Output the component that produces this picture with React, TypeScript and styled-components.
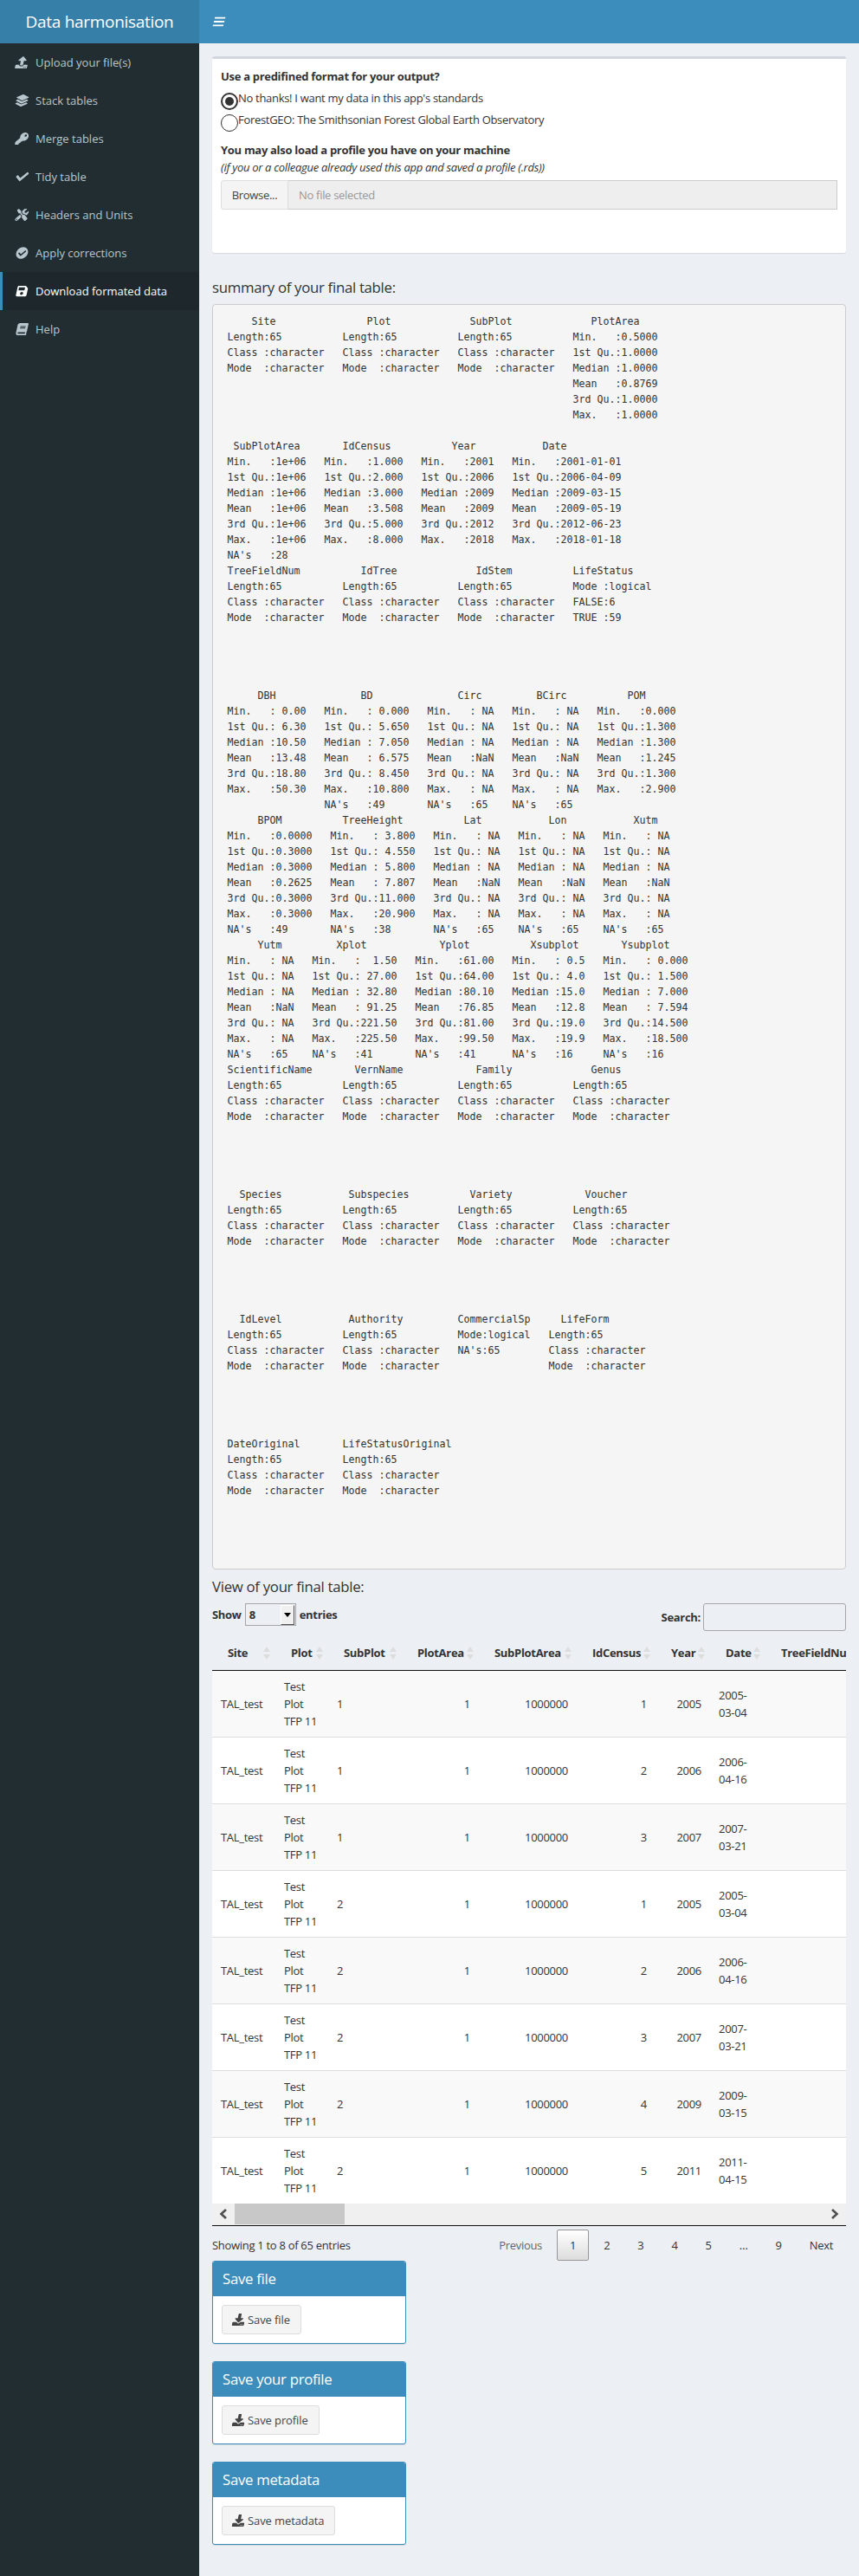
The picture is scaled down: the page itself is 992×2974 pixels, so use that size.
import React from "react";
import styled, { createGlobalStyle } from "styled-components";
import { FaUpload, FaLayerGroup, FaKey, FaCheck, FaTools, FaCheckCircle, FaSave, FaBook, FaDownload, FaBars } from "react-icons/fa";

const SANS = `"Open Sans", "Noto Sans", sans-serif`;

const Global = createGlobalStyle`
  html, body { margin: 0; padding: 0; background: #ecf0f5; }
  body { font-family: ${SANS}; font-size: 13px; letter-spacing: -0.3px; line-height: 20px; color: #333; }
  * { box-sizing: border-box; }
`;

const Page = styled.div`width: 992px; min-height: 2974px; display: flex; flex-direction: column;`;
const TopBar = styled.header`display: flex; height: 50px; background: #3c8dbc; flex: none;`;
const Logo = styled.div`width: 230px; background: #367fa9; color: #fff; font-size: 19px; line-height: 50px; text-align: center; letter-spacing: -0.3px;`;
const Toggle = styled.div`
  margin-left: 15px; display: flex; align-items: center; color: #fff; font-size: 14px;
  svg { transform: skewX(-14deg); width: 16px; height: 14px; }
`;
const Body = styled.div`display: flex; flex: 1;`;
const Side = styled.nav`width: 230px; flex: none; background: #222d32; letter-spacing: 0;`;
const NavItem = styled.div<{ $active?: boolean }>`
  height: 44px; display: flex; align-items: center; gap: 8px;
  padding-left: ${p => (p.$active ? "15px" : "18px")};
  border-left: ${p => (p.$active ? "3px solid #3c8dbc" : "0")};
  background: ${p => (p.$active ? "#1e282c" : "transparent")};
  color: ${p => (p.$active ? "#fff" : "#b8c7ce")};
  svg { width: 15px; height: 14px; flex: none; transform: skewX(-12deg); }
`;
const Main = styled.main`flex: 1; min-width: 0; padding: 15px;`;
const Card = styled.section`
  height: 227px; background: #fff; border-top: 3px solid #d2d6de; border-radius: 3px;
  box-shadow: 0 1px 1px rgba(0,0,0,.1); padding: 10px;
`;
const Strong = styled.div`font-weight: 700;`;
const RadioRow = styled.label`
  display: flex; align-items: flex-start; height: 25px;
  &:first-of-type { margin-top: 9px; }
`;
const RadioInput = styled.input`
  appearance: none; width: 20px; height: 20px; margin: 0; flex: none; border-radius: 50%;
  border: 1.3px solid #333; background: #fff; position: relative;
  &:checked { border-width: 2px; }
  &:checked::after { content: ""; position: absolute; left: 3px; top: 3px; width: 10px; height: 10px; border-radius: 50%; background: #333; }
`;
const RadioText = styled.span`margin-top: -4px;`;
const ProfileTitle = styled(Strong)`margin-top: 6px;`;
const Hint = styled.div`font-style: italic;`;
const FileRow = styled.div`display: flex; height: 34px; margin-top: 5px;`;
const Browse = styled.div`
  width: 78px; background: #f4f4f4; border: 1px solid #ddd; border-radius: 3px 0 0 3px; color: #444;
  line-height: 32px; text-align: center;
`;
const FileName = styled.div`
  flex: 1; background: #eee; border: 1px solid #ccc; border-left: 0; color: #999; padding-left: 12px; line-height: 32px;
`;
const Heading = styled.h4<{ $top: number }>`
  margin: ${p => p.$top}px 0 9px; font-weight: 400; font-size: 16.8px; line-height: 20px; color: #333; letter-spacing: -0.3px;
`;
const Summary = styled.pre`
  margin: 0; height: 1461px; padding: 9.5px; background: #f5f5f5; border: 1px solid #ccc; border-radius: 4px;
  font-family: "DejaVu Sans Mono", monospace; font-size: 11.63px; line-height: 18px; letter-spacing: 0; color: #333; overflow: hidden;
`;
const TableTop = styled.div`display: flex; justify-content: space-between; height: 32px; margin-bottom: 5px; font-weight: 700;`;
const LengthBox = styled.div`display: flex; align-items: flex-start; height: 26px; line-height: 26px; gap: 4px;`;
const Select = styled.div`
  width: 59px; height: 26px; border: 1px solid #a6a6a6; padding: 0 1px 0 4px;
  display: flex; justify-content: space-between; align-items: center;
`;
const SelectArrow = styled.span`
  width: 16px; height: 23px; background: #f0f0f0; display: flex; align-items: center; justify-content: center;
  border: 1px solid; border-color: #fff #555 #555 #fff;
  &::after { content: ""; border: 4px solid transparent; border-top: 5px solid #000; border-bottom: 0; }
`;
const SearchBox = styled.div`display: flex; align-items: center; gap: 3px;`;
const SearchInput = styled.input`width: 165px; height: 32px; border: 1px solid #a6a6a6; border-radius: 3px; background: transparent; margin: 0;`;
const TableClip = styled.div`overflow: hidden; width: 732px;`;
const Table = styled.table`table-layout: fixed; border-collapse: separate; border-spacing: 0; width: 780px;`;
const Th = styled.th`
  position: relative; padding: 10px 18px; height: 41px; font-weight: 700; text-align: left; white-space: nowrap; overflow: hidden;
  border-bottom: 1px solid #111; color: #333;
`;
const SortMark = styled.span`
  position: absolute; right: 5px; top: 13px; width: 9px; height: 15px;
  &::before, &::after { content: ""; position: absolute; left: 0; border: 4.5px solid transparent; }
  &::before { top: 0; border-bottom: 6px solid #ddd; border-top: 0; }
  &::after { bottom: 0; border-top: 6px solid #ddd; border-bottom: 0; }
`;
const Tr = styled.tr<{ $odd: boolean }>`
  background: ${p => (p.$odd ? "#f9f9f9" : "#fff")};
`;
const Td = styled.td<{ $right?: boolean }>`
  height: 77px; padding: 8px 10px; text-align: ${p => (p.$right ? "right" : "left")}; vertical-align: middle;
  border-bottom: 1px solid #ddd; white-space: nowrap;
  tr:last-child & { border-bottom: 0; height: 76px; }
`;
const ScrollBar = styled.div`
  height: 26px; background: #f0f0f0; border-bottom: 1px solid #111; display: flex; align-items: stretch; justify-content: space-between; padding-bottom: 1px;
`;
const ScrollEnd = styled.span`width: 26px; display: flex; align-items: center; justify-content: center;`;
const Thumb = styled.span`width: 127px; background: #c8c8c8;`;
const ScrollFill = styled.span`flex: 1; display: flex;`;
const Footer = styled.div`display: flex; justify-content: space-between; margin-top: 4px; height: 36px;`;
const Info = styled.div`line-height: 36px; margin-top: 0;`;
const Pager = styled.div`display: flex; gap: 2px;`;
const PageBtn = styled.span<{ $current?: boolean; $muted?: boolean }>`
  height: 36px; min-width: 37px; padding: 0 14px; line-height: 34px; text-align: center; border-radius: 2px;
  border: 1px solid ${p => (p.$current ? "#979797" : "transparent")};
  background: ${p => (p.$current ? "linear-gradient(#fff, #dcdcdc)" : "transparent")};
  color: ${p => (p.$muted ? "#666" : "#333")};
`;
const SaveBox = styled.section`
  width: 224px; height: 96px; margin-bottom: 20px; background: #fff; border: 1px solid #3c8dbc; border-radius: 3px;
  box-shadow: 0 1px 1px rgba(0,0,0,.1); overflow: hidden;
`;
const SaveHead = styled.div`height: 40px; background: #3c8dbc; color: #fff; padding: 0 10px 0 11px; font-size: 16.8px; line-height: 40px;`;
const SaveBody = styled.div`padding: 10px;`;
const SaveBtn = styled.div`
  display: inline-flex; align-items: center; gap: 3px; height: 34px; padding: 0 12px; background: #f4f4f4; border: 1px solid #ddd; border-radius: 3px; color: #444; letter-spacing: -0.1px;
  svg { transform: skewX(-12deg); width: 14px; height: 14px; }
`;

type Block = { at: number[]; head: [number, string][]; rows: string[][] };
const T = ["Length:65", "Class :character", "Mode  :character"];
const stats = (vals: string[], na?: string) => {
  const l = ["Min.   :", "1st Qu.:", "Median :", "Mean   :", "3rd Qu.:", "Max.   :"];
  const r = vals.map((v, i) => l[i] + v);
  return na ? [...r, "NA's   :" + na] : r;
};
const NAc = stats([" NA", " NA", " NA", "NaN", " NA", " NA"], "65");
const txt = (n: number) => Array.from({ length: n }, () => T);
const pivot = (cols: string[][]) => {
  const h = Math.max(...cols.map(c => c.length));
  return Array.from({ length: h }, (_, i) => cols.map(c => c[i] ?? ""));
};
const blocks: Block[] = [
  { at: [1, 20, 39, 58], head: [[5, "Site"], [24, "Plot"], [41, "SubPlot"], [61, "PlotArea"]],
    rows: pivot([T, T, T, stats(["0.5000", "1.0000", "1.0000", "0.8769", "1.0000", "1.0000"])]) },
  { at: [1, 17, 33, 48], head: [[2, "SubPlotArea"], [20, "IdCensus"], [38, "Year"], [53, "Date"]],
    rows: pivot([
      stats(["1e+06", "1e+06", "1e+06", "1e+06", "1e+06", "1e+06"], "28"),
      stats(["1.000", "2.000", "3.000", "3.508", "5.000", "8.000"]),
      stats(["2001", "2006", "2009", "2009", "2012", "2018"]),
      stats(["2001-01-01", "2006-04-09", "2009-03-15", "2009-05-19", "2012-06-23", "2018-01-18"]),
    ]) },
  { at: [1, 20, 39, 58], head: [[1, "TreeFieldNum"], [23, "IdTree"], [42, "IdStem"], [58, "LifeStatus"]],
    rows: pivot([T, T, T, ["Mode :logical", "FALSE:6", "TRUE :59"]]) },
  { at: [1, 17, 34, 48, 62], head: [[6, "DBH"], [23, "BD"], [39, "Circ"], [52, "BCirc"], [67, "POM"]],
    rows: pivot([
      stats([" 0.00", " 6.30", "10.50", "13.48", "18.80", "50.30"]),
      stats([" 0.000", " 5.650", " 7.050", " 6.575", " 8.450", "10.800"], "49"),
      NAc, NAc,
      stats(["0.000", "1.300", "1.300", "1.245", "1.300", "2.900"]),
    ]) },
  { at: [1, 18, 35, 49, 63], head: [[6, "BPOM"], [20, "TreeHeight"], [40, "Lat"], [54, "Lon"], [68, "Xutm"]],
    rows: pivot([
      stats(["0.0000", "0.3000", "0.3000", "0.2625", "0.3000", "0.3000"], "49"),
      stats([" 3.800", " 4.550", " 5.800", " 7.807", "11.000", "20.900"], "38"),
      NAc, NAc, NAc,
    ]) },
  { at: [1, 15, 32, 48, 63], head: [[6, "Yutm"], [19, "Xplot"], [36, "Yplot"], [51, "Xsubplot"], [66, "Ysubplot"]],
    rows: pivot([
      NAc,
      stats(["  1.50", " 27.00", " 32.80", " 91.25", "221.50", "225.50"], "41"),
      stats(["61.00", "64.00", "80.10", "76.85", "81.00", "99.50"], "41"),
      stats([" 0.5", " 4.0", "15.0", "12.8", "19.0", "19.9"], "16"),
      stats([" 0.000", " 1.500", " 7.000", " 7.594", "14.500", "18.500"], "16"),
    ]) },
  { at: [1, 20, 39, 58], head: [[1, "ScientificName"], [22, "VernName"], [42, "Family"], [61, "Genus"]], rows: pivot(txt(4)) },
  { at: [1, 20, 39, 58], head: [[3, "Species"], [21, "Subspecies"], [41, "Variety"], [60, "Voucher"]], rows: pivot(txt(4)) },
  { at: [1, 20, 39, 54], head: [[3, "IdLevel"], [21, "Authority"], [39, "CommercialSp"], [56, "LifeForm"]],
    rows: pivot([T, T, ["Mode:logical", "NA's:65"], T]) },
  { at: [1, 20], head: [[1, "DateOriginal"], [20, "LifeStatusOriginal"]], rows: pivot(txt(2)) },
];
const place = (cells: [number, string][]) =>
  cells.reduce((s, [i, t]) => s.padEnd(i, " ") + t, "");
const summary = blocks
  .map(b => {
    const lines = [place(b.head), ...b.rows.map(r => place(r.map((c, i) => [b.at[i], c] as [number, string])))];
    while (lines.length < 8) lines.push("");
    return lines.join("\n");
  })
  .join("\n");

const nav = [
  { icon: <FaUpload />, label: "Upload your file(s)" },
  { icon: <FaLayerGroup />, label: "Stack tables" },
  { icon: <FaKey />, label: "Merge tables" },
  { icon: <FaCheck />, label: "Tidy table" },
  { icon: <FaTools />, label: "Headers and Units" },
  { icon: <FaCheckCircle />, label: "Apply corrections" },
  { icon: <FaSave />, label: "Download formated data", active: true },
  { icon: <FaBook />, label: "Help" },
];
const cols: [string, number][] = [
  ["Site", 73], ["Plot", 61], ["SubPlot", 85], ["PlotArea", 89], ["SubPlotArea", 113],
  ["IdCensus", 91], ["Year", 63], ["Date", 64], ["TreeFieldNum", 141],
];
const data: [string, string, string, string][] = [
  ["1", "1", "2005", "2005-03-04"], ["1", "2", "2006", "2006-04-16"], ["1", "3", "2007", "2007-03-21"],
  ["2", "1", "2005", "2005-03-04"], ["2", "2", "2006", "2006-04-16"], ["2", "3", "2007", "2007-03-21"],
  ["2", "4", "2009", "2009-03-15"], ["2", "5", "2011", "2011-04-15"],
];
const pages = ["2", "3", "4", "5", "…", "9"];
const saves = [["Save file", "Save file"], ["Save your profile", "Save profile"], ["Save metadata", "Save metadata"]];

const Chevron = ({ dir }: { dir: "l" | "r" }) => (
  <svg width="10" height="12" viewBox="0 0 10 12" fill="none" stroke="#505050" strokeWidth="2.6">
    <path d={dir === "l" ? "M8 1 L2.5 6 L8 11" : "M2 1 L7.5 6 L2 11"} />
  </svg>
);

export default function App() {
  return (
    <Page>
      <Global />
      <TopBar>
        <Logo>Data harmonisation</Logo>
        <Toggle><FaBars /></Toggle>
      </TopBar>
      <Body>
        <Side>
          {nav.map(n => (
            <NavItem key={n.label} $active={n.active}>{n.icon}<span>{n.label}</span></NavItem>
          ))}
        </Side>
        <Main>
          <Card>
            <Strong>Use a predifined format for your output?</Strong>
            <RadioRow><RadioInput type="radio" name="fmt" defaultChecked /><RadioText>No thanks! I want my data in this app's standards</RadioText></RadioRow>
            <RadioRow><RadioInput type="radio" name="fmt" /><RadioText>ForestGEO: The Smithsonian Forest Global Earth Observatory</RadioText></RadioRow>
            <ProfileTitle>You may also load a profile you have on your machine</ProfileTitle>
            <Hint>(if you or a colleague already used this app and saved a profile (.rds))</Hint>
            <FileRow><Browse>Browse...</Browse><FileName>No file selected</FileName></FileRow>
          </Card>
          <Heading $top={30}>summary of your final table:</Heading>
          <Summary>{summary}</Summary>
          <Heading $top={10}>View of your final table:</Heading>
          <TableTop>
            <LengthBox>Show <Select>8<SelectArrow /></Select> entries</LengthBox>
            <SearchBox>Search: <SearchInput /></SearchBox>
          </TableTop>
          <TableClip>
            <Table>
              <colgroup>{cols.map(([c, w]) => <col key={c} width={w} />)}</colgroup>
              <thead>
                <tr>{cols.map(([c]) => <Th key={c}>{c}<SortMark /></Th>)}</tr>
              </thead>
              <tbody>
                {data.map((r, i) => (
                  <Tr key={i} $odd={i % 2 === 0}>
                    <Td>TAL_test</Td>
                    <Td>Test<br />Plot<br />TFP 11</Td>
                    <Td>{r[0]}</Td>
                    <Td $right>1</Td>
                    <Td $right>1000000</Td>
                    <Td $right>{r[1]}</Td>
                    <Td $right>{r[2]}</Td>
                    <Td>{r[3].slice(0, 5)}<br />{r[3].slice(5)}</Td>
                    <Td />
                  </Tr>
                ))}
              </tbody>
            </Table>
            <ScrollBar>
              <ScrollEnd><Chevron dir="l" /></ScrollEnd>
              <ScrollFill><Thumb /></ScrollFill>
              <ScrollEnd><Chevron dir="r" /></ScrollEnd>
            </ScrollBar>
          </TableClip>
          <Footer>
            <Info>Showing 1 to 8 of 65 entries</Info>
            <Pager>
              <PageBtn $muted>Previous</PageBtn>
              <PageBtn $current>1</PageBtn>
              {pages.map(p => <PageBtn key={p}>{p}</PageBtn>)}
              <PageBtn>Next</PageBtn>
            </Pager>
          </Footer>
          {saves.map(([h, b]) => (
            <SaveBox key={h}>
              <SaveHead>{h}</SaveHead>
              <SaveBody><SaveBtn><FaDownload />{b}</SaveBtn></SaveBody>
            </SaveBox>
          ))}
        </Main>
      </Body>
    </Page>
  );
}
